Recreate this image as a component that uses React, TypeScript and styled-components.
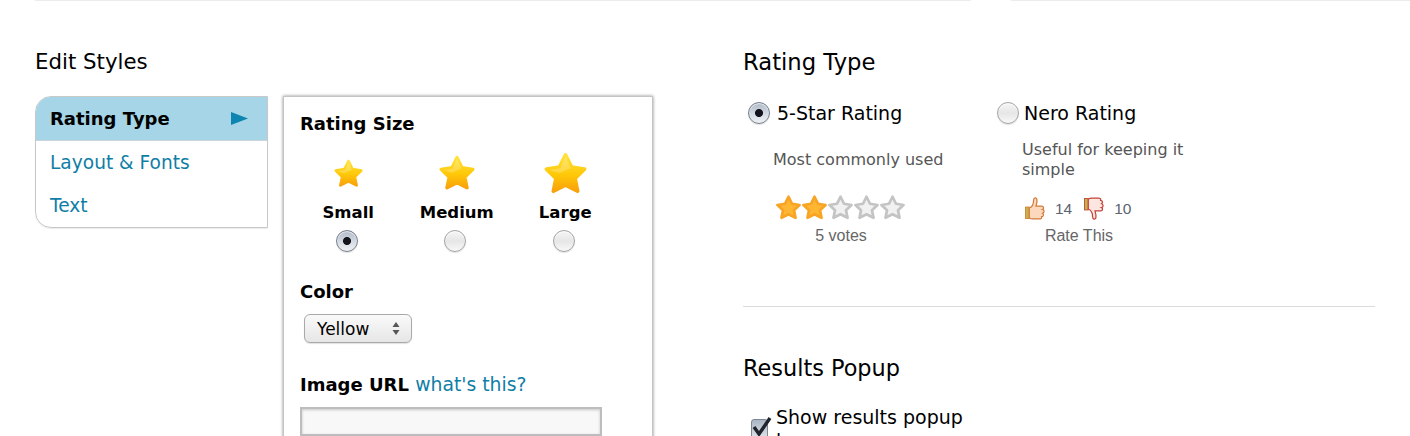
import { createGlobalStyle } from 'styled-components'
import styled from 'styled-components'

const GlobalStyle = createGlobalStyle`
    html, body {
        margin: 0;
        padding: 0;
        background: #fff;
    }

    body {
        font-family: "DejaVu Sans", Verdana, sans-serif;
        color: #000;
    }
`

const Page = styled.div`
    width: 1410px;
    height: 436px;
    overflow: hidden;
`

const TopRules = styled.div`
    display: flex;
    gap: 40px;
    height: 1px;
    padding-left: 35px;
`

const TopRule = styled.div<{ $width?: number }>`
    flex: ${(p) => (p.$width ? `0 0 ${p.$width}px` : '1')};
    background: #ececec;
`

const Columns = styled.div`
    display: flex;
    padding: 48px 35px 0;
`

const LeftColumn = styled.section`
    flex: 0 0 708px;
`

const RightColumn = styled.section`
    flex: 0 0 632px;
`

const Heading = styled.h2<{ $size: number }>`
    margin: 0;
    font-size: ${(p) => p.$size}px;
    font-weight: 400;
    line-height: 26px;
`

const EditorRow = styled.div`
    display: flex;
    gap: 15px;
    margin-top: 21px;
    align-items: flex-start;
`

const Menu = styled.nav`
    width: 233px;
    height: 132px;
    box-sizing: border-box;
    border: 1px solid #c8c8c8;
    border-radius: 16px 0 0 16px;
    box-shadow: 0 1px 1px rgba(0, 0, 0, 0.08);
    overflow: hidden;
`

const MenuItem = styled.a<{ $active?: boolean }>`
    display: flex;
    align-items: center;
    justify-content: space-between;
    box-sizing: border-box;
    height: ${(p) => (p.$active ? '44px' : '42px')};
    margin-bottom: ${(p) => (p.$active ? '0' : '1px')};
    padding: 0 19px 0 14px;
    font-size: ${(p) => (p.$active ? '18px' : '18.6px')};
    font-weight: ${(p) => (p.$active ? 700 : 400)};
    color: ${(p) => (p.$active ? '#000' : '#0f7ea6')};
    background: ${(p) => (p.$active ? '#a5d5e6' : 'transparent')};
    border-bottom: ${(p) => (p.$active ? '1px solid #c9d4d8' : 'none')};
`

const Panel = styled.div`
    width: 370px;
    height: 400px;
    box-sizing: border-box;
    padding: 14px 16px;
    background: #fff;
    border: 1px solid #c4c4c4;
    box-shadow: 0 0 3px rgba(0, 0, 0, 0.45);
`

const FieldLabel = styled.div`
    font-size: 18px;
    font-weight: 700;
    line-height: 26px;
`

const SizeGrid = styled.div`
    display: grid;
    grid-template-columns: repeat(3, 108.5px);
    margin: 14px 0 0 -6px;
`

const SizeOption = styled.div`
    display: flex;
    flex-direction: column;
    align-items: center;
`

const StarSlot = styled.div`
    display: flex;
    align-items: center;
    justify-content: center;
    height: 44px;
`

const SizeLabel = styled.div`
    margin-top: 6px;
    font-size: 16.5px;
    font-weight: 700;
    line-height: 24px;
`

const Radio = styled.input.attrs({ type: 'radio' })`
    appearance: none;
    display: block;
    flex: none;
    width: 22px;
    height: 22px;
    margin: 0;
    border-radius: 50%;
    border: 1px solid #a4a4a4;
    background: linear-gradient(#f6f6f6 0%, #e6e6e6 50%, #f8f8f8 100%);
    box-shadow: inset 0 1px 1px rgba(255, 255, 255, 0.8), 0 1px 1px rgba(0, 0, 0, 0.12);
    box-sizing: border-box;

    &:checked {
        border-color: #77808c;
        background:
            radial-gradient(circle, #14141c 0 3.6px, transparent 4.4px),
            linear-gradient(#aeb8c6 0%, #d6dce4 55%, #eef1f5 100%);
    }
`

const SizeRadio = styled(Radio)`
    margin: 5px 3px 0 0;
`

const ColorField = styled.div`
    margin-top: 27px;
`

const SelectBox = styled.div`
    display: flex;
    align-items: center;
    justify-content: space-between;
    box-sizing: border-box;
    width: 108px;
    height: 29px;
    margin: 9px 0 0 4px;
    padding: 0 11px 0 12px;
    font-size: 17px;
    border: 1px solid #a9a9a9;
    border-radius: 6px;
    background: linear-gradient(#fafafa 0%, #efefef 55%, #e6e6e6 100%);
    box-shadow: 0 1px 1px rgba(0, 0, 0, 0.12);
`

const ImageField = styled.div`
    margin-top: 29px;
`

const HelpLink = styled.a`
    font-size: 18.8px;
    font-weight: 400;
    color: #0f7ea6;
`

const TextInput = styled.input`
    display: block;
    width: 302px;
    height: 29px;
    box-sizing: border-box;
    margin-top: 9px;
    border: 2px solid #bdbdbd;
    background: #f8f8f8;
    box-shadow: inset 0 1px 3px rgba(0, 0, 0, 0.2);
`

const TypeRow = styled.div`
    display: flex;
    margin: 26px 0 0 5px;
`

const TypeCard = styled.div<{ $width: number }>`
    width: ${(p) => p.$width}px;
`

const TypeTitle = styled.label<{ $gap: number }>`
    display: flex;
    align-items: center;
    gap: ${(p) => p.$gap}px;
    font-size: 19px;
    line-height: 24px;
`

const TypeBody = styled.div`
    padding-left: 25px;
`

const TypeDescription = styled.p`
    display: flex;
    align-items: center;
    height: 40px;
    margin: 15px 0 0;
    font-size: 16px;
    line-height: 20px;
    color: #555;
`

const StarRow = styled.div`
    display: flex;
    gap: 1px;
    margin: 14px 0 0 3px;
    height: 26px;
    align-items: center;
`

const ThumbRow = styled.div`
    display: flex;
    align-items: center;
    height: 23px;
    margin: 17px 0 0 3px;
`

const Count = styled.span`
    font-family: "Liberation Sans", Arial, sans-serif;
    font-size: 15.5px;
    color: #5c6470;
    margin: 0 12px 0 10px;
`

const Caption = styled.div<{ $width: number }>`
    width: ${(p) => p.$width}px;
    margin-top: 6px;
    text-align: center;
    font-family: "Liberation Sans", Arial, sans-serif;
    font-size: 16px;
    line-height: 20px;
    color: #666;
`

const Divider = styled.hr`
    height: 1px;
    margin: 60px 0 48px;
    border: 0;
    background: #dcdcdc;
`

const CheckRow = styled.label`
    display: flex;
    gap: 8px;
    width: 215px;
    margin: 24px 0 0 8px;
    font-size: 19px;
    line-height: 24px;
`

const CheckBoxIcon = styled.div`
    flex: none;
    position: relative;
    width: 17px;
    height: 20px;
    margin-top: 14px;
    box-sizing: border-box;
    border: 1px solid #7e8794;
    border-radius: 3px;
    background: linear-gradient(#aab5c4, #dfe4ea);
`

const CheckMark = styled.svg`
    position: absolute;
    top: -6px;
    left: -1px;
`

const Arrow = () => (
    <svg width="17" height="13" viewBox="0 0 17 13">
        <path d="M0 0 L17 6.5 L0 13 Z" fill="#0d85b0" />
    </svg>
)

const SelectArrows = () => (
    <svg width="8" height="13" viewBox="0 0 8 13">
        <path d="M4 0 L7.5 5 H0.5 Z M4 13 L0.5 8 H7.5 Z" fill="#555" />
    </svg>
)

const STAR_PATH = 'M50 7 L64 35 L94 40 L72 61 L78 91 L50 77 L22 91 L28 61 L6 40 L36 35 Z'

const GlossyStar = ({ size, id }: { size: number; id: string }) => (
    <svg width={size} height={size} viewBox="0 0 100 100">
        <defs>
            <linearGradient id={id} x1="0" y1="0" x2="0" y2="1">
                <stop offset="0" stopColor="#ffe23a" />
                <stop offset="0.55" stopColor="#ffc808" />
                <stop offset="1" stopColor="#f9a10a" />
            </linearGradient>
        </defs>
        <path d={STAR_PATH} fill={`url(#${id})`} stroke={`url(#${id})`} strokeWidth="9" strokeLinejoin="round" />
        <path d="M50 10 L38 38 L12 42 L36 49 Q52 42 62 37 Z" fill="#fff" opacity="0.22" />
    </svg>
)

const RatingStar = ({ on }: { on?: boolean }) => (
    <svg width="25" height="25" viewBox="0 0 100 100">
        <path
            d={STAR_PATH}
            fill={on ? '#ffb632' : '#f1f1f1'}
            stroke={on ? '#f8a526' : '#c4c4c4'}
            strokeWidth="11"
            strokeLinejoin="round"
        />
    </svg>
)

const ThumbUp = () => (
    <svg width="20" height="25" viewBox="0 0 21 25">
        <rect x="0.5" y="11" width="4" height="12" fill="#c9b04e" stroke="#d08a3a" />
        <path
            d="M4.5 12 C7 11 9 8 9 4 C9 1 12 0.5 12.5 3 C13 6 12 8 11.5 10 L17.5 10 C20 10 20 13 18.5 13.5 C20.5 14 20.5 17 18.5 17.5 C20 18.5 19.5 21 17.5 21 C18 23 16.5 23.5 15 23.5 L8 23.5 C6.5 23.5 5.5 23 4.5 22.5 Z"
            fill="#fcd9bd"
            stroke="#d27b3a"
            strokeWidth="1.3"
        />
    </svg>
)

const ThumbDown = () => (
    <svg width="20" height="25" viewBox="0 0 21 25">
        <rect x="0.5" y="2" width="4" height="12" fill="#c9b04e" stroke="#c0503c" />
        <path
            d="M4.5 13 C7 14 9 17 9 21 C9 24 12 24.5 12.5 22 C13 19 12 17 11.5 15 L17.5 15 C20 15 20 12 18.5 11.5 C20.5 11 20.5 8 18.5 7.5 C20 6.5 19.5 4 17.5 4 C18 2 16.5 1.5 15 1.5 L8 1.5 C6.5 1.5 5.5 2 4.5 2.5 Z"
            fill="#fde6e0"
            stroke="#c2453c"
            strokeWidth="1.3"
        />
    </svg>
)

const App = () => (
    <Page>
        <GlobalStyle />
        <TopRules>
            <TopRule $width={936} />
            <TopRule />
        </TopRules>
        <Columns>
            <LeftColumn>
                <Heading $size={21.3}>Edit Styles</Heading>
                <EditorRow>
                    <Menu>
                        <MenuItem $active>
                            Rating Type
                            <Arrow />
                        </MenuItem>
                        <MenuItem>Layout &amp; Fonts</MenuItem>
                        <MenuItem>Text</MenuItem>
                    </Menu>
                    <Panel>
                        <FieldLabel>Rating Size</FieldLabel>
                        <SizeGrid>
                            <SizeOption>
                                <StarSlot><GlossyStar size={29} id="star-s" /></StarSlot>
                                <SizeLabel>Small</SizeLabel>
                                <SizeRadio name="size" defaultChecked />
                            </SizeOption>
                            <SizeOption>
                                <StarSlot><GlossyStar size={36} id="star-m" /></StarSlot>
                                <SizeLabel>Medium</SizeLabel>
                                <SizeRadio name="size" />
                            </SizeOption>
                            <SizeOption>
                                <StarSlot><GlossyStar size={43} id="star-l" /></StarSlot>
                                <SizeLabel>Large</SizeLabel>
                                <SizeRadio name="size" />
                            </SizeOption>
                        </SizeGrid>
                        <ColorField>
                            <FieldLabel>Color</FieldLabel>
                            <SelectBox>
                                Yellow
                                <SelectArrows />
                            </SelectBox>
                        </ColorField>
                        <ImageField>
                            <FieldLabel>
                                Image URL <HelpLink>what's this?</HelpLink>
                            </FieldLabel>
                            <TextInput />
                        </ImageField>
                    </Panel>
                </EditorRow>
            </LeftColumn>
            <RightColumn>
                <Heading $size={22.7}>Rating Type</Heading>
                <TypeRow>
                    <TypeCard $width={249}>
                        <TypeTitle $gap={7}>
                            <Radio name="type" defaultChecked />
                            5-Star Rating
                        </TypeTitle>
                        <TypeBody>
                            <TypeDescription>Most commonly used</TypeDescription>
                            <StarRow>
                                <RatingStar on />
                                <RatingStar on />
                                <RatingStar />
                                <RatingStar />
                                <RatingStar />
                            </StarRow>
                            <Caption $width={136}>5 votes</Caption>
                        </TypeBody>
                    </TypeCard>
                    <TypeCard $width={200}>
                        <TypeTitle $gap={5}>
                            <Radio name="type" />
                            Nero Rating
                        </TypeTitle>
                        <TypeBody>
                            <TypeDescription>Useful for keeping it simple</TypeDescription>
                            <ThumbRow>
                                <ThumbUp />
                                <Count>14</Count>
                                <ThumbDown />
                                <Count>10</Count>
                            </ThumbRow>
                            <Caption $width={114}>Rate This</Caption>
                        </TypeBody>
                    </TypeCard>
                </TypeRow>
                <Divider />
                <Heading $size={22.4}>Results Popup</Heading>
                <CheckRow>
                    <CheckBoxIcon>
                        <CheckMark width="22" height="24" viewBox="0 0 22 24">
                            <path d="M3 13 L8 20 L19 4" fill="none" stroke="#20242c" strokeWidth="3.4" />
                        </CheckMark>
                    </CheckBoxIcon>
                    <span>Show results popup box</span>
                </CheckRow>
            </RightColumn>
        </Columns>
    </Page>
)

export default App
